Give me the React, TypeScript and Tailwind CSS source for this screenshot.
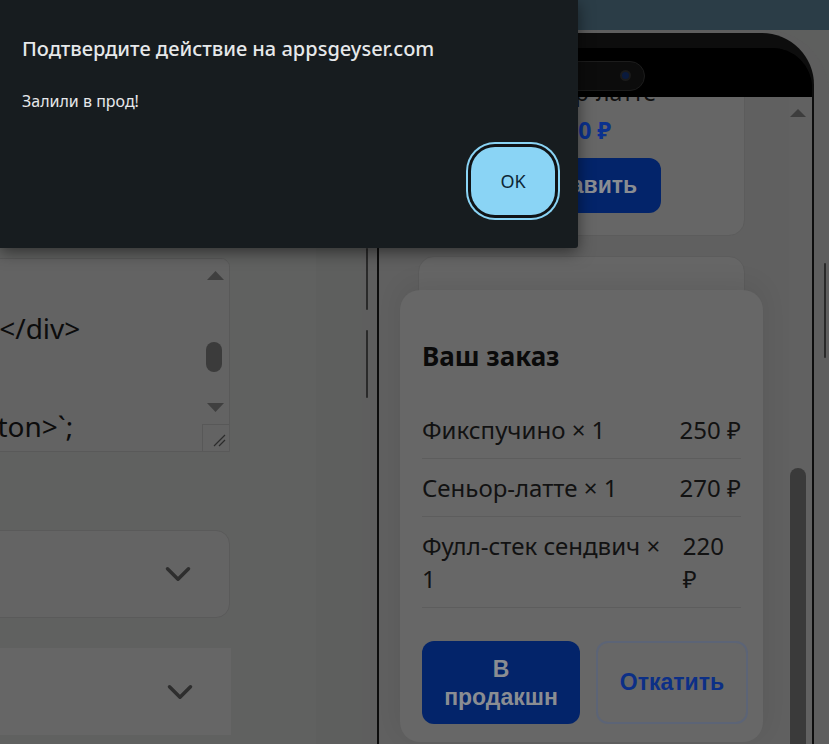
import { ChevronDown } from 'lucide-react';

const orderItems = [
  { name: 'Фикспучино × 1', price: '250 ₽' },
  { name: 'Сеньор-латте × 1', price: '270 ₽' },
  { name: 'Фулл-стек сендвич × 1', price: '220 ₽' },
];

const ConfirmDialog = () => (
  <div className="absolute left-0 top-0 h-[248px] w-[578px] rounded-br-[3px] bg-[#171c1f] px-[22px] pt-[35px] text-[#e6e8ea] shadow-[0_4px_16px_rgba(0,0,0,0.5)]">
    <div className="text-[20px] font-medium leading-[28px]">Подтвердите действие на appsgeyser.com</div>
    <div className="mt-[28px] text-[16px] leading-[21px]">Залили в прод!</div>
    <div className="mt-[35px] flex justify-end pr-[1px]">
      <button className="h-[68px] w-[84px] rounded-[24px] bg-[#8ad4f5] text-[18px] text-[#0d2636] shadow-[0_0_0_3px_#101316,0_0_0_5px_#8ad4f5]">
        OK
      </button>
    </div>
  </div>
);

const FakeTextarea = () => (
  <div className="relative -ml-[123px] mr-[86px] mt-[228px] h-[194px] overflow-hidden rounded-tr-[9px] border border-[#595959] bg-[#636363] pl-[12px] pt-[45px] text-[28px] leading-[49px] text-[#0c0c0c]">
    <div className="whitespace-pre">{'               </div>'}</div>
    <div className="whitespace-pre">{' '}</div>
    <div className="whitespace-pre">{'     </button>`;'}</div>
    {/* scrollbar */}
    <div className="absolute bottom-0 right-0 top-0 w-[26px] bg-[#636363]">
      <svg className="absolute left-[4px] top-[12px]" width="17" height="9" viewBox="0 0 17 9">
        <polygon points="0,9 8.5,0 17,9" fill="#3f3f3f" />
      </svg>
      <div className="absolute left-[3px] top-[83px] h-[30px] w-[16px] rounded-full bg-[#3b3b3b]" />
      <svg className="absolute left-[4px] top-[144px]" width="17" height="9" viewBox="0 0 17 9">
        <polygon points="0,0 17,0 8.5,9" fill="#3f3f3f" />
      </svg>
      <div className="absolute bottom-0 right-0 h-[27px] w-[27px] border-l border-t border-[#585858]">
        <svg className="absolute bottom-[4px] right-[3px]" width="14" height="14" viewBox="0 0 14 14">
          <path d="M2 13 L13 2 M7 13 L13 7" stroke="#2b2b2b" strokeWidth="1.2" />
        </svg>
      </div>
    </div>
  </div>
);

const LeftPanel = () => (
  <div className="flex w-[316px] shrink-0 flex-col bg-[#606160]">
    <FakeTextarea />
    <div className="-ml-[40px] mr-[86px] mt-[78px] flex h-[88px] items-center justify-end rounded-[14px] border border-[#5a5a5a] bg-[#646464] pr-[30px] text-[#2e2e2e]">
      <ChevronDown size={42} strokeWidth={2} />
    </div>
    <div className="-ml-[40px] mr-[85px] mt-[30px] flex h-[87px] items-center justify-end bg-[#666666] pr-[30px] text-[#2e2e2e]">
      <ChevronDown size={42} strokeWidth={2} />
    </div>
  </div>
);

const ProductCard = ({ title, price }: { title: string; price: string }) => (
  <div className="ml-[39px] w-[327px] rounded-[16px] border border-[#5c5c5c] bg-[#666666] px-[20px] pb-[22px] pt-[20px] text-center">
    {/* photo area */}
    <div className="h-[164px] rounded-[12px]" />
    <div className="mt-[12px] text-[23px] leading-[32px] text-[#111111]">{title}</div>
    <div className="mt-[7px] text-[23px] font-bold leading-[30px] text-[#0b318f]">{price}</div>
    <button className="mt-[13px] h-[55px] rounded-[12px] bg-[#03246a] px-[24px] font-['Liberation_Sans',Arial,sans-serif] text-[23px] font-bold text-[#8a8d92]">
      Добавить
    </button>
  </div>
);

const OrderPanel = () => (
  <div className="absolute left-[21px] top-[193px] h-[452px] w-[363px] rounded-[20px] bg-[#676767] px-[22px] pt-[51px] shadow-[0_-6px_24px_rgba(0,0,0,0.08)]">
    <h3 className="text-[26px] font-bold leading-[31px] text-[#0a0a0a]">Ваш заказ</h3>
    <div className="mt-[29px]">
      {orderItems.map((item) => (
        <div
          key={item.name}
          className="flex justify-between gap-4 border-b border-[#5d5d5d] py-[12px] text-[24px] leading-[33px] text-[#121212]"
        >
          <span>{item.name}</span>
          <span>{item.price}</span>
        </div>
      ))}
    </div>
    <div className="-mr-[7px] mt-[33px] flex gap-4 font-['Liberation_Sans',Arial,sans-serif] text-[23px] font-bold">
      <button className="h-[83px] w-[158px] rounded-[12px] bg-[#03246a] leading-[28px] text-[#8a8d92]">
        В<br />продакшн
      </button>
      <button className="h-[83px] flex-1 rounded-[12px] border-2 border-[#5c6476] text-[#0c2f86]">
        Откатить
      </button>
    </div>
  </div>
);

const Phone = () => (
  <div className="relative ml-[46px] w-[467px] shrink-0 rounded-t-[64px] bg-[#5e5e5e] px-[15px] pt-[3px]">
    {/* side buttons */}
    <div className="absolute left-[4px] top-[218px] h-[62px] w-[2px] rounded-full bg-[#2a2a2a]" />
    <div className="absolute left-[4px] top-[300px] h-[68px] w-[2px] rounded-full bg-[#2a2a2a]" />
    <div className="absolute right-[3px] top-[233px] h-[95px] w-[2px] rounded-full bg-[#2a2a2a]" />

    <div className="rounded-t-[52px] bg-[#0d0d0d] px-[2px] pt-[15px]">
      <div className="h-[700px] overflow-hidden rounded-t-[40px] bg-black">
        {/* status bar with island */}
        <div className="relative h-[49px] bg-black">
          <div className="absolute left-[167px] top-[13px] h-[30px] w-[99px] rounded-full border border-[#1c1c1c] bg-[#0c0c0c]">
            <div className="absolute right-[13px] top-[8px] size-[11px] rounded-full border-2 border-[#1a1a1a] bg-[#0a1a3c]" />
          </div>
        </div>

        <div className="flex h-[651px]">
          <div className="relative w-[410px] overflow-hidden bg-[#606060]">
            <div className="-mt-[218px] flex flex-col gap-[20px]">
              <ProductCard title="Сеньор-латте" price="270 ₽" />
              <ProductCard title="Фулл-стек сендвич" price="220 ₽" />
            </div>
            <OrderPanel />
          </div>

          {/* scrollbar */}
          <div className="relative w-[23px] bg-[#616161]">
            <svg className="absolute left-[1px] top-[12px]" width="16" height="8" viewBox="0 0 16 8">
              <polygon points="0,8 8,0 16,8" fill="#3d3d3d" />
            </svg>
            <div className="absolute left-[1px] top-[371px] h-[400px] w-[16px] rounded-full bg-[#3a3a3a]" />
          </div>
        </div>
      </div>
    </div>
  </div>
);

export default function App() {
  return (
    <div className="relative h-[744px] w-[829px] overflow-hidden bg-[#5e5f5e] font-['Noto_Sans',sans-serif]">
      <div className="h-[30px] bg-[#2b3d47]" />
      <div className="flex">
        <LeftPanel />
        <Phone />
      </div>
      <ConfirmDialog />
    </div>
  );
}
